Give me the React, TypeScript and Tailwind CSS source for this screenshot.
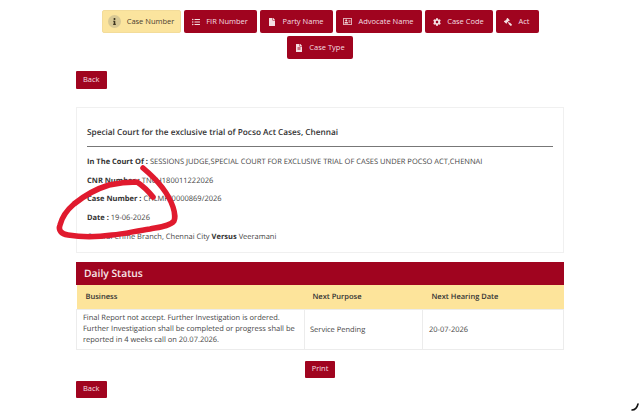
import { ReactNode } from "react";
import { FaCog, FaFile, FaFileAlt, FaGavel, FaInfo, FaListUl, FaRegAddressCard } from "react-icons/fa";

const TabButton = ({
  icon,
  label,
  width,
  active,
}: {
  icon: ReactNode;
  label: string;
  width: string;
  active?: boolean;
}) => (
  <button
    type="button"
    className={`flex h-[23px] items-center justify-center gap-[6px] rounded-[2px] text-[7.5px] ${width} ${
      active
        ? "border border-[#f3dc9a] bg-[#fbe49e] text-[#4a4030]"
        : "bg-[#a0041f] text-[#f4dfe2]"
    }`}
  >
    {icon}
    {label}
  </button>
);

const RedButton = ({ label, height }: { label: string; height: string }) => (
  <button
    type="button"
    className={`flex items-center justify-center rounded-[1px] bg-[#a0041f] px-[7px] text-[7.5px] text-[#f4dfe2] ${height}`}
  >
    {label}
  </button>
);

const Line = ({ children }: { children: ReactNode }) => (
  <p className="flex h-[18.75px] items-center whitespace-pre text-[7.5px] text-[#444]">{children}</p>
);

export default function App() {
  return (
    <div
      className="relative h-[413px] w-[640px] overflow-hidden bg-white px-[76px] pt-[10px] [text-rendering:geometricPrecision]"
      style={{ fontFamily: '"Open Sans", sans-serif' }}
    >
      <div className="-mx-[76px] flex flex-col items-center gap-[3px]">
        <div className="flex gap-[3px]">
          <TabButton
            active
            width="w-[79px]"
            label="Case Number"
            icon={
              <span className="flex h-[13px] w-[13px] items-center justify-center rounded-full bg-[#d8c894] text-[#3d3520]">
                <FaInfo size={7} />
              </span>
            }
          />
          <TabButton width="w-[73px]" label="FIR Number" icon={<FaListUl size={8} />} />
          <TabButton width="w-[73px]" label="Party Name" icon={<FaFile size={8} />} />
          <TabButton width="w-[86px]" label="Advocate Name" icon={<FaRegAddressCard size={9} />} />
          <TabButton width="w-[68px]" label="Case Code" icon={<FaCog size={8} />} />
          <TabButton width="w-[43px]" label="Act" icon={<FaGavel size={8} className="-scale-x-100" />} />
        </div>
        <TabButton width="w-[66px]" label="Case Type" icon={<FaFileAlt size={8} />} />
      </div>

      <div className="mt-[12px] flex">
        <RedButton label="Back" height="h-[18px]" />
      </div>

      <div className="mt-[18px] h-[146px] border border-[#f0f0f0] px-[10px] pt-[18px]">
        <h2 className="text-[8.25px] font-semibold leading-[14px] text-[#333]">
          Special Court for the exclusive trial of Pocso Act Cases, Chennai
        </h2>
        <hr className="mt-[6px] border-[#777]" />
        <div className="mt-[6px]">
          <Line>
            <b className="font-bold text-[#333]">In The Court Of : </b>
            SESSIONS JUDGE,SPECIAL COURT FOR EXCLUSIVE TRIAL OF CASES UNDER POCSO ACT,CHENNAI
          </Line>
          <Line>
            <b className="font-bold text-[#333]">CNR Number : </b>
            TNCH180011222026
          </Line>
          <Line>
            <b className="font-bold text-[#333]">Case Number : </b>
            CHLMP/0000869/2026
          </Line>
          <Line>
            <b className="font-bold text-[#333]">Date : </b>
            19-06-2026
          </Line>
          <Line>
            Central Crime Branch, Chennai City <b className="font-bold text-[#333]">Versus</b> Veeramani
          </Line>
        </div>
      </div>

      <div className="mt-[9px]">
        <div className="flex h-[23px] items-center bg-[#a0041f] px-[8px] pt-[2px] text-[10.3px] font-semibold text-[#f8e6e8]">
          Daily Status
        </div>
        <table className="w-full table-fixed border-collapse text-[7.5px] text-[#444]">
          <thead>
            <tr className="h-[24px] bg-[#fde49b] text-left text-[#333]">
              <th className="w-[228px] pl-[9px] pt-[2px] font-semibold">Business</th>
              <th className="w-[118px] pl-[8px] pt-[2px] font-semibold">Next Purpose</th>
              <th className="pl-[9px] pt-[2px] font-semibold">Next Hearing Date</th>
            </tr>
          </thead>
          <tbody>
            <tr className="h-[40px] border border-[#ececec]">
              <td className="px-[6px] pt-[1px] leading-[10.7px]">
                Final Report not accept. Further Investigation is ordered. Further Investigation shall be
                completed or progress shall be reported in 4 weeks call on 20.07.2026.
              </td>
              <td className="border-l border-[#ececec] px-[5px] pt-[3px]">Service Pending</td>
              <td className="border-l border-[#ececec] px-[6px] pt-[3px]">20-07-2026</td>
            </tr>
          </tbody>
        </table>
      </div>

      <div className="mt-[11px] flex justify-center">
        <RedButton label="Print" height="h-[17px]" />
      </div>
      <div className="mt-[3px] flex">
        <RedButton label="Back" height="h-[17px]" />
      </div>

      {/* pen scribble drawn over the screenshot */}
      <svg className="absolute left-0 top-0" width="640" height="413" viewBox="0 0 640 413" fill="none">
        <path
          d="M143 168 C155 178 168 192 173 207 C175 213 175 219 174 221 C170 226 160 227 150 229 C135 231 125 234 112 235 C98 237 80 237 68 235 C61 234 58 230 60 225 C62 217 67 210 74 204 C85 195 96 189 109 185 C118 183 128 182 137 182 C143 186 149 192 153 197"
          stroke="#e01a2e"
          strokeWidth="5.5"
          strokeLinecap="round"
          strokeLinejoin="round"
        />
        <path d="M632 410 C635 410 637 408 638 404" stroke="#111" strokeWidth="1.6" strokeLinecap="round" />
      </svg>
    </div>
  );
}
